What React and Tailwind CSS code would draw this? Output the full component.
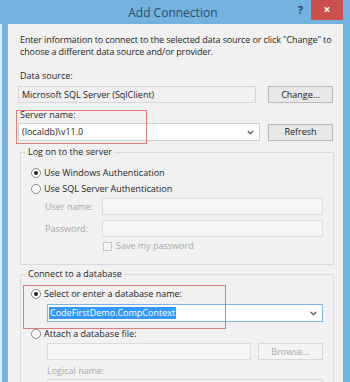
import React from "react";

const font = { fontFamily: '"Open Sans", "Noto Sans", sans-serif' };

const Radio = ({ checked }) => (
  <span className="flex h-[10px] w-[10px] shrink-0 items-center justify-center rounded-full border border-[#8a8a8a] bg-white">
    {checked && <span className="h-[4px] w-[4px] rounded-full bg-[#222]" />}
  </span>
);

const Chevron = () => (
  <svg width="7" height="5" viewBox="0 0 7 5" className="shrink-0">
    <path d="M0.8 1 L3.5 3.7 L6.2 1" fill="none" stroke="#555" strokeWidth="1.3" />
  </svg>
);

const Button = ({ children, disabled }) => (
  <div
    className={
      "flex h-[17px] w-[65px] items-center justify-center border text-[9px] " +
      (disabled
        ? "border-[#d8d8d8] bg-[#f4f4f4] text-[#a8a8a8]"
        : "border-[#b8b8b8] bg-[#e8e8e8] text-[#222]")
    }
  >
    {children}
  </div>
);

export default function App() {
  return (
    <div className="h-[382px] w-[350px] overflow-hidden bg-[#74b3df] text-[9px] leading-[12px] text-[#1e1e1e]" style={font}>
      {/* title bar */}
      <div className="flex h-[24px] items-start">
        <div className="flex-1 pt-[5px] pl-[48px] text-center text-[12px] leading-[16px] text-[#2d4a68]">Add Connection</div>
        <div className="pt-[3px] pr-[8px] text-[11px] font-bold leading-[14px] text-[#2d3f55]">?</div>
        <div className="mr-[7px] flex h-[20px] w-[32px] items-center justify-center bg-[#c9504b] text-[12px] font-bold text-white">
          ×
        </div>
      </div>

      <div className="flex h-[358px]">
        <div className="w-[8px] border-l-[2px] border-[#dfeaf2]" />
        <div className="flex-1 bg-[#f1f1f1] pl-[10px] pt-[10px]">
          <p className="ml-[2px] whitespace-nowrap tracking-[-0.12px]">
            Enter information to connect to the selected data source or click "Change" to
            <br />
            choose a different data source and/or provider.
          </p>

          <div className="mt-[12px] ml-[2px]">Data source:</div>
          <div className="mt-[4px] flex items-center gap-[12px]">
            <div className="flex h-[17px] w-[238px] items-center border border-[#d6d6d6] bg-[#f0f0f0] pl-[3px]">
              Microsoft SQL Server (SqlClient)
            </div>
            <Button>Change...</Button>
          </div>

          <div className="relative mt-[5px]">
            <div className="absolute -left-[2px] top-[2px] h-[34px] w-[131px] border border-[#e07b7b]" />
            <div className="ml-[2px] pt-[1px]">Server name:</div>
            <div className="mt-[2px] flex items-center gap-[8px]">
              <div className="flex h-[18px] w-[242px] items-center justify-between border border-[#d0d0d0] bg-white pl-[3px] pr-[5px]">
                <span>(localdb)\v11.0</span>
                <Chevron />
              </div>
              <Button>Refresh</Button>
            </div>
          </div>

          {/* log on group */}
          <div className="relative ml-[2px] mt-[11px] h-[113px] w-[314px] border border-[#dadada] pl-[10px]">
            <div className="absolute -top-[7px] left-[5px] bg-[#f1f1f1] px-[2px]">Log on to the server</div>
            <div className="mt-[14px] flex items-center gap-[3px]">
              <Radio checked />
              <span>Use Windows Authentication</span>
            </div>
            <div className="mt-[4px] flex items-center gap-[3px]">
              <Radio />
              <span>Use SQL Server Authentication</span>
            </div>
            <div className="mt-[3px] flex items-center">
              <span className="w-[71px] whitespace-nowrap pl-[14px] text-[#a8a8a8]">User name:</span>
              <div className="h-[17px] w-[221px] border border-[#dcdcdc] bg-[#f5f5f5]" />
            </div>
            <div className="mt-[5px] flex items-center">
              <span className="w-[71px] whitespace-nowrap pl-[14px] text-[#a8a8a8]">Password:</span>
              <div className="h-[17px] w-[221px] border border-[#dcdcdc] bg-[#f5f5f5]" />
            </div>
            <div className="mt-[3px] ml-[72px] flex items-center gap-[4px] text-[#a8a8a8]">
              <span className="h-[9px] w-[9px] border border-[#c8c8c8] bg-[#f5f5f5]" />
              <span>Save my password</span>
            </div>
          </div>

          {/* connect group */}
          <div className="relative ml-[2px] mt-[9px] h-[120px] w-[314px] border border-[#dadada] pl-[10px]">
            <div className="absolute -top-[7px] left-[5px] bg-[#f1f1f1] px-[2px]">Connect to a database</div>
            <div className="absolute left-[2px] top-[10px] h-[44px] w-[203px] border border-[#e07b7b]" />
            <div className="mt-[13px] flex items-center gap-[3px]">
              <Radio checked />
              <span>Select or enter a database name:</span>
            </div>
            <div className="ml-[16px] mt-[4px] flex h-[18px] w-[276px] items-center justify-between border border-[#7eb4ea] bg-white pl-[1px] pr-[5px]">
              <span className="bg-[#3399ff] px-[1px] text-white">CodeFirstDemo.CompContext</span>
              <Chevron />
            </div>
            <div className="mt-[6px] flex items-center gap-[3px]">
              <Radio />
              <span>Attach a database file:</span>
            </div>
            <div className="ml-[16px] mt-[3px] flex items-center gap-[7px]">
              <div className="h-[17px] w-[204px] border border-[#dcdcdc] bg-[#f5f5f5]" />
              <Button disabled>Browse...</Button>
            </div>
            <div className="ml-[16px] mt-[5px] text-[#a8a8a8]">Logical name:</div>
            <div className="ml-[16px] mt-[2px] h-[17px] w-[276px] border border-[#dcdcdc] bg-[#f5f5f5]" />
          </div>
        </div>
        <div className="w-[7px]" />
      </div>
    </div>
  );
}
